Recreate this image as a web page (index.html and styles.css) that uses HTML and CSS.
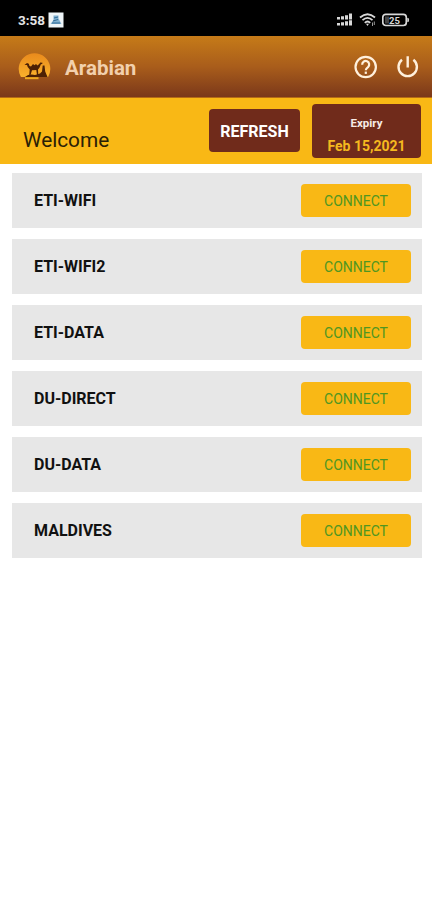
FILE: index.html
```html
<!DOCTYPE html>
<html lang="en">
<head>
  <meta charset="UTF-8" />
  <meta name="viewport" content="width=device-width, initial-scale=1.0" />
  <title>Arabian</title>
  <link rel="stylesheet" href="styles.css">
</head>
<body>
  <div class="status-bar">
    <span class="time">3:58</span>
    <svg class="notification" width="16" height="16" viewBox="0 0 16 16">
      <rect x="0.500" y="0.500" width="15" height="15" fill="#eef5f8" />
      <path d="M5.500 3.500h5v3l3 5.500H2.500l3-4z" fill="#7fb0d0" />
      <path d="M6 6l4-1M5 9l5-1.500M4 11h8" stroke="#326d98" fill="none" />
    </svg>
    <div class="status-icons">
      <svg width="18" height="16" viewBox="0 0 18 16" fill="#d8d8d8">
        <path d="M1 5h3v2.500H1zM5 4.200h3v3.300H5zM9 3.200h3v4.300H9zM13 1.500h3v6h-3zM1 11h3v2.500H1zM5 10.300h3v3.200H5zM9 9.300h3v4.200H9zM13 8.300h3v5.200h-3z" />
      </svg>
      <svg class="wifi" width="18" height="16" viewBox="0 0 18 16" fill="none" stroke="#d8d8d8" stroke-width="1.800">
        <path d="M1 5.500Q8.500-1 16 5.500M3.500 8.200Q8.500 3.500 13.500 8.200M5.800 10.800Q8.500 8.200 11.200 10.800" />
        <path d="M7 11.800h3l-1.500 2.200z" fill="#d8d8d8" stroke="none" />
        <path d="M13.500 10.500v3.500M15.300 9.500v3.500" stroke="#999" stroke-width="1" />
      </svg>
      <svg width="28" height="14" viewBox="0 0 28 14">
        <rect x="0.800" y="1.300" width="23.500" height="11.200" rx="3" fill="none" stroke="#d8d8d8" stroke-width="1.700" />
        <path d="M25.300 5h1.200q1.200 2 0 4h-1.200z" fill="#d8d8d8" />
        <rect x="3" y="3.500" width="4" height="7" fill="#444" />
        <text class="battery-text" x="12.500" y="10.700" text-anchor="middle">25</text>
      </svg>
    </div>
  </div>

  <header class="header">
    <svg class="logo" width="34" height="30" viewBox="0 0 34 30">
      <defs>
        <linearGradient id="sun" x1="0" y1="0" x2="0" y2="1">
          <stop offset="0" stop-color="#e98a1c" />
          <stop offset="1" stop-color="#f9b12b" />
        </linearGradient>
      </defs>
      <path d="M3.900 25A15.800 15.800 0 1 1 31.100 25z" fill="url(#sun)" />
      <path d="M7.500 13l2.500-2 1.800.8.700 2.200 1.500.5 2-2.500 1.500 1.200 1.500-1.200 1.500 1.500 1.700-1.500 1-1.500 2.300.3-.3 1.200-1.300.2-1.500 3.500-1.400 1.800.3 5.500h-1.300l-.7-5-4.300.2-1.500 4.800h-1.300l.5-5.500-2-2.500-.7-2z" fill="#4c2105" />
      <path d="M8 25q4-3.500 10-2l5-1.500 2-2 .7-6h1.800l.7 6 2.300 5.500z" fill="#4c2105" />
      <path d="M8 26.200h13.500" stroke="#efa91f" stroke-width="2" />
    </svg>
    <h1>Arabian</h1>
    <div class="header-icons">
      <svg width="24" height="24" viewBox="0 0 24 24" fill="none" stroke="#fff0dc" stroke-width="2.200">
        <circle cx="11.700" cy="12" r="10.200" />
        <path d="M8.200 9.700a3.500 3.500 0 1 1 5.800 2.400q-2.200 1.500-2.200 3.100" />
        <path d="M11.800 16.600v2.300" />
      </svg>
      <svg width="24" height="24" viewBox="0 0 24 24" fill="none" stroke="#fff0dc" stroke-width="2.400">
        <path d="M11.700 1.300v11.200M6 4.700a9.200 9.200 0 1 0 11.400 0" />
      </svg>
    </div>
  </header>

  <section class="welcome">
    <span class="welcome-text">Welcome</span>
    <button class="refresh">REFRESH</button>
    <div class="expiry">
      <span class="expiry-label">Expiry</span>
      <span class="expiry-date">Feb 15,2021</span>
    </div>
  </section>

  <main class="servers">
    <div class="server"><span>ETI-WIFI</span><button class="connect">CONNECT</button></div>
    <div class="server"><span>ETI-WIFI2</span><button class="connect">CONNECT</button></div>
    <div class="server"><span>ETI-DATA</span><button class="connect">CONNECT</button></div>
    <div class="server"><span>DU-DIRECT</span><button class="connect">CONNECT</button></div>
    <div class="server"><span>DU-DATA</span><button class="connect">CONNECT</button></div>
    <div class="server"><span>MALDIVES</span><button class="connect">CONNECT</button></div>
  </main>
</body>
</html>
```
FILE: styles.css
```css
* {
  box-sizing: border-box;
}
body {
  margin: 0;
  min-height: 100vh;
  background-color: #fff;
  font-family: Roboto, Arial, sans-serif;
}
button {
  border: none;
  padding: 0;
  font-family: inherit;
  cursor: pointer;
}
.status-bar {
  display: flex;
  align-items: center;
  height: 36px;
  padding: 4px 22px 0 18px;
  background-color: #000;
  color: #e5e5e5;
}
.time {
  width: 30px;
  font-size: 13.500px;
  font-weight: bold;
}
.status-icons {
  display: flex;
  align-items: center;
  margin-left: auto;
}
.wifi {
  margin: 0 5px;
}
.battery-text {
  font-size: 9.500px;
  font-weight: bold;
  fill: #d8d8d8;
}
.header {
  display: flex;
  align-items: center;
  height: 62px;
  padding: 0 12px 0 17px;
  background: linear-gradient(#c67b18, #a95d1b 50%, #7b381a);
  border-bottom: 1px solid #b56b15;
}
.logo {
  margin-top: 1px;
}
h1 {
  margin: 2px 0 0 14px;
  font-size: 20.500px;
  line-height: 24px;
  font-weight: bold;
  color: #f2d0ad;
}
.header-icons {
  display: flex;
  gap: 18px;
  margin-left: auto;
}
.welcome {
  display: flex;
  align-items: flex-start;
  height: 66px;
  padding: 6px 11px 0 23px;
  background-color: #f9b815;
}
.welcome-text {
  flex: 1;
  margin-top: 23px;
  font-size: 20.800px;
  line-height: 26px;
  color: #2a2106;
}
.refresh {
  width: 91px;
  height: 43px;
  margin: 5px 12px 0 0;
  padding-top: 2px;
  border-radius: 4px;
  background-color: #702b1b;
  color: #fff;
  font-size: 16px;
  font-weight: bold;
}
.expiry {
  display: flex;
  flex-direction: column;
  align-items: center;
  width: 109px;
  height: 54px;
  padding-top: 11px;
  border-radius: 4px;
  background-color: #702b1b;
}
.expiry-label {
  font-size: 11.500px;
  line-height: 16px;
  font-weight: bold;
  color: #f7eae5;
}
.expiry-date {
  margin-top: 6px;
  font-size: 14px;
  line-height: 18px;
  font-weight: bold;
  color: #f5b91f;
}
.servers {
  display: flex;
  flex-direction: column;
  gap: 11px;
  padding: 8.500px 10px 0 12px;
}
.server {
  display: flex;
  align-items: center;
  justify-content: space-between;
  height: 55.100px;
  padding: 0 11px 0 22px;
  background-color: #e7e7e7;
  color: #111;
  font-size: 16px;
  font-weight: bold;
}
.connect {
  width: 110px;
  height: 33px;
  padding-top: 1px;
  border-radius: 4px;
  background-color: #f9b815;
  color: #4f9621;
  font-size: 14px;
}
```
